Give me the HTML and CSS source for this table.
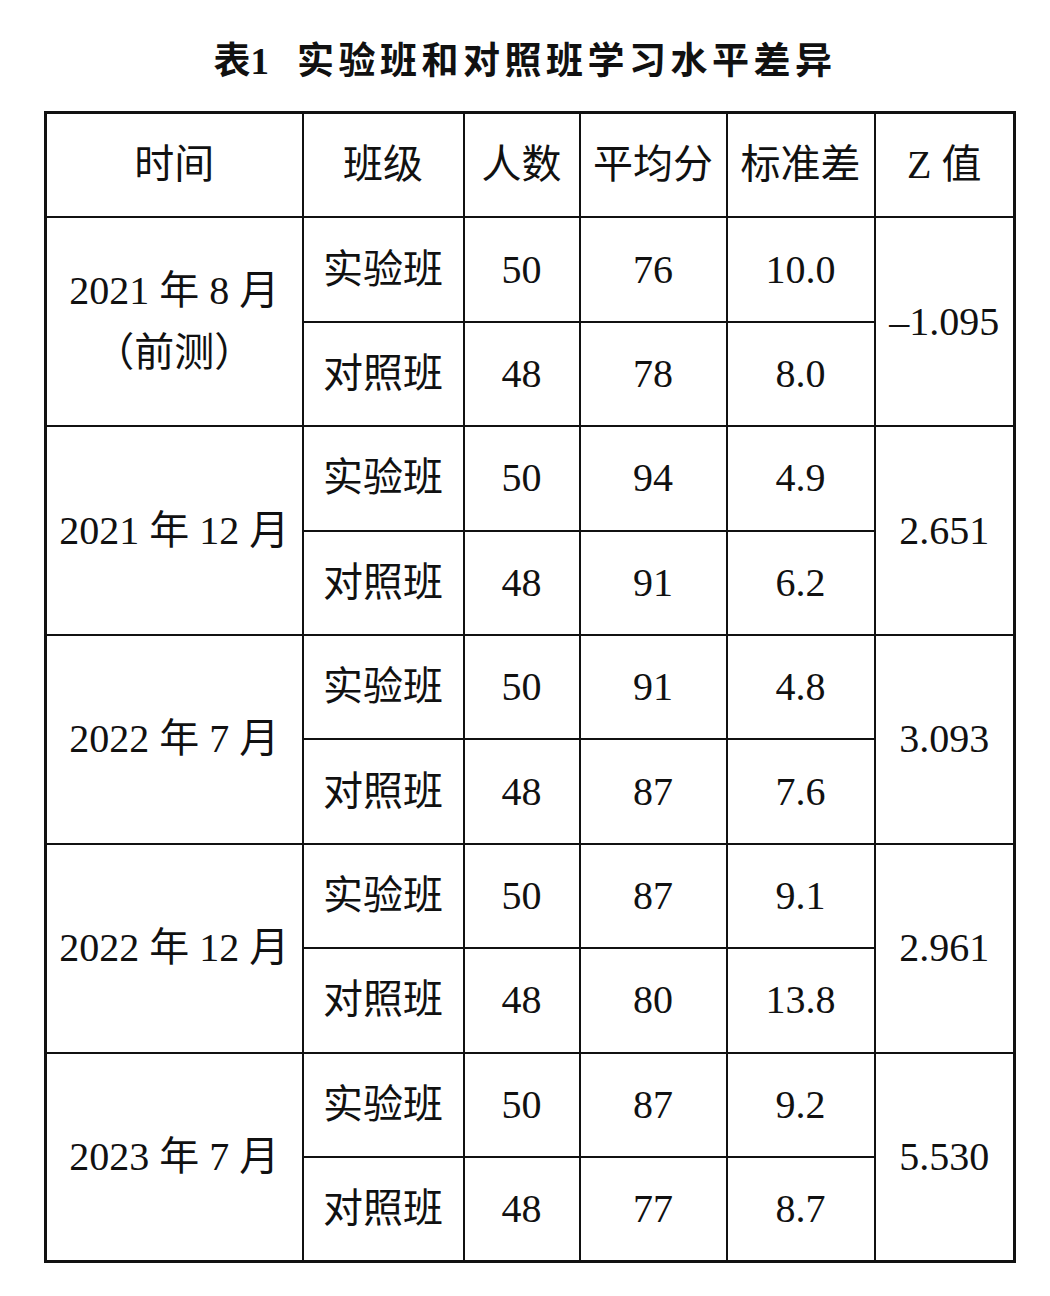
FILE: index.html
```html
<!DOCTYPE html>
<html lang="zh-CN">
<head>
<meta charset="utf-8">
<title>表1 实验班和对照班学习水平差异</title>
<link rel="stylesheet" href="styles.css">
</head>
<body>
<div class="page">
  <h1 class="title"><span class="title-num">表1</span><span class="title-text">实验班和对照班学习水平差异</span></h1>
  <table class="data">
    <colgroup>
      <col class="c1"><col class="c2"><col class="c3"><col class="c4"><col class="c5"><col class="c6">
    </colgroup>
    <thead>
      <tr><th>时间</th><th>班级</th><th>人数</th><th>平均分</th><th>标准差</th><th>Z 值</th></tr>
    </thead>
    <tbody>
      <tr><td rowspan="2" class="time">2021 年 8 月<br>（前测）</td><td>实验班</td><td>50</td><td>76</td><td>10.0</td><td rowspan="2">–1.095</td></tr>
      <tr><td>对照班</td><td>48</td><td>78</td><td>8.0</td></tr>
      <tr><td rowspan="2" class="time">2021 年 12 月</td><td>实验班</td><td>50</td><td>94</td><td>4.9</td><td rowspan="2">2.651</td></tr>
      <tr><td>对照班</td><td>48</td><td>91</td><td>6.2</td></tr>
      <tr><td rowspan="2" class="time">2022 年 7 月</td><td>实验班</td><td>50</td><td>91</td><td>4.8</td><td rowspan="2">3.093</td></tr>
      <tr><td>对照班</td><td>48</td><td>87</td><td>7.6</td></tr>
      <tr><td rowspan="2" class="time">2022 年 12 月</td><td>实验班</td><td>50</td><td>87</td><td>9.1</td><td rowspan="2">2.961</td></tr>
      <tr><td>对照班</td><td>48</td><td>80</td><td>13.8</td></tr>
      <tr><td rowspan="2" class="time">2023 年 7 月</td><td>实验班</td><td>50</td><td>87</td><td>9.2</td><td rowspan="2">5.530</td></tr>
      <tr><td>对照班</td><td>48</td><td>77</td><td>8.7</td></tr>
    </tbody>
  </table>
</div>
</body>
</html>
```
FILE: styles.css
```css
html, body {
  margin: 0;
  padding: 0;
  background: #ffffff;
}
.page {
  width: 1050px;
  padding-top: 36px;
  color: #111111;
}
.title {
  margin: 0;
  height: 75px;
  line-height: 44px;
  text-align: center;
  font-size: 37px;
  font-weight: bold;
  font-family: "Noto Sans CJK SC", "Liberation Sans", sans-serif;
  letter-spacing: 4.5px;
  color: #111;
}
.title-num {
  font-family: "Liberation Serif", "Noto Sans CJK SC", serif;
  margin-right: 28px;
  letter-spacing: 0;
}
.data {
  margin-left: 44px;
  border-collapse: collapse;
  table-layout: fixed;
  width: 969px;
  border: 3px solid #111;
  font-family: "Liberation Serif", "Noto Sans CJK SC", serif;
  font-size: 40px;
  color: #111;
}
.c1 { width: 257px; }
.c2 { width: 161px; }
.c3 { width: 116px; }
.c4 { width: 147px; }
.c5 { width: 148px; }
.c6 { width: 140px; }
.data th, .data td {
  border: 2px solid #111;
  padding: 0;
  text-align: center;
  vertical-align: middle;
  font-weight: normal;
  height: 102.4px;
  line-height: 48px;
}
.data td.time {
  line-height: 62px;
}
```
